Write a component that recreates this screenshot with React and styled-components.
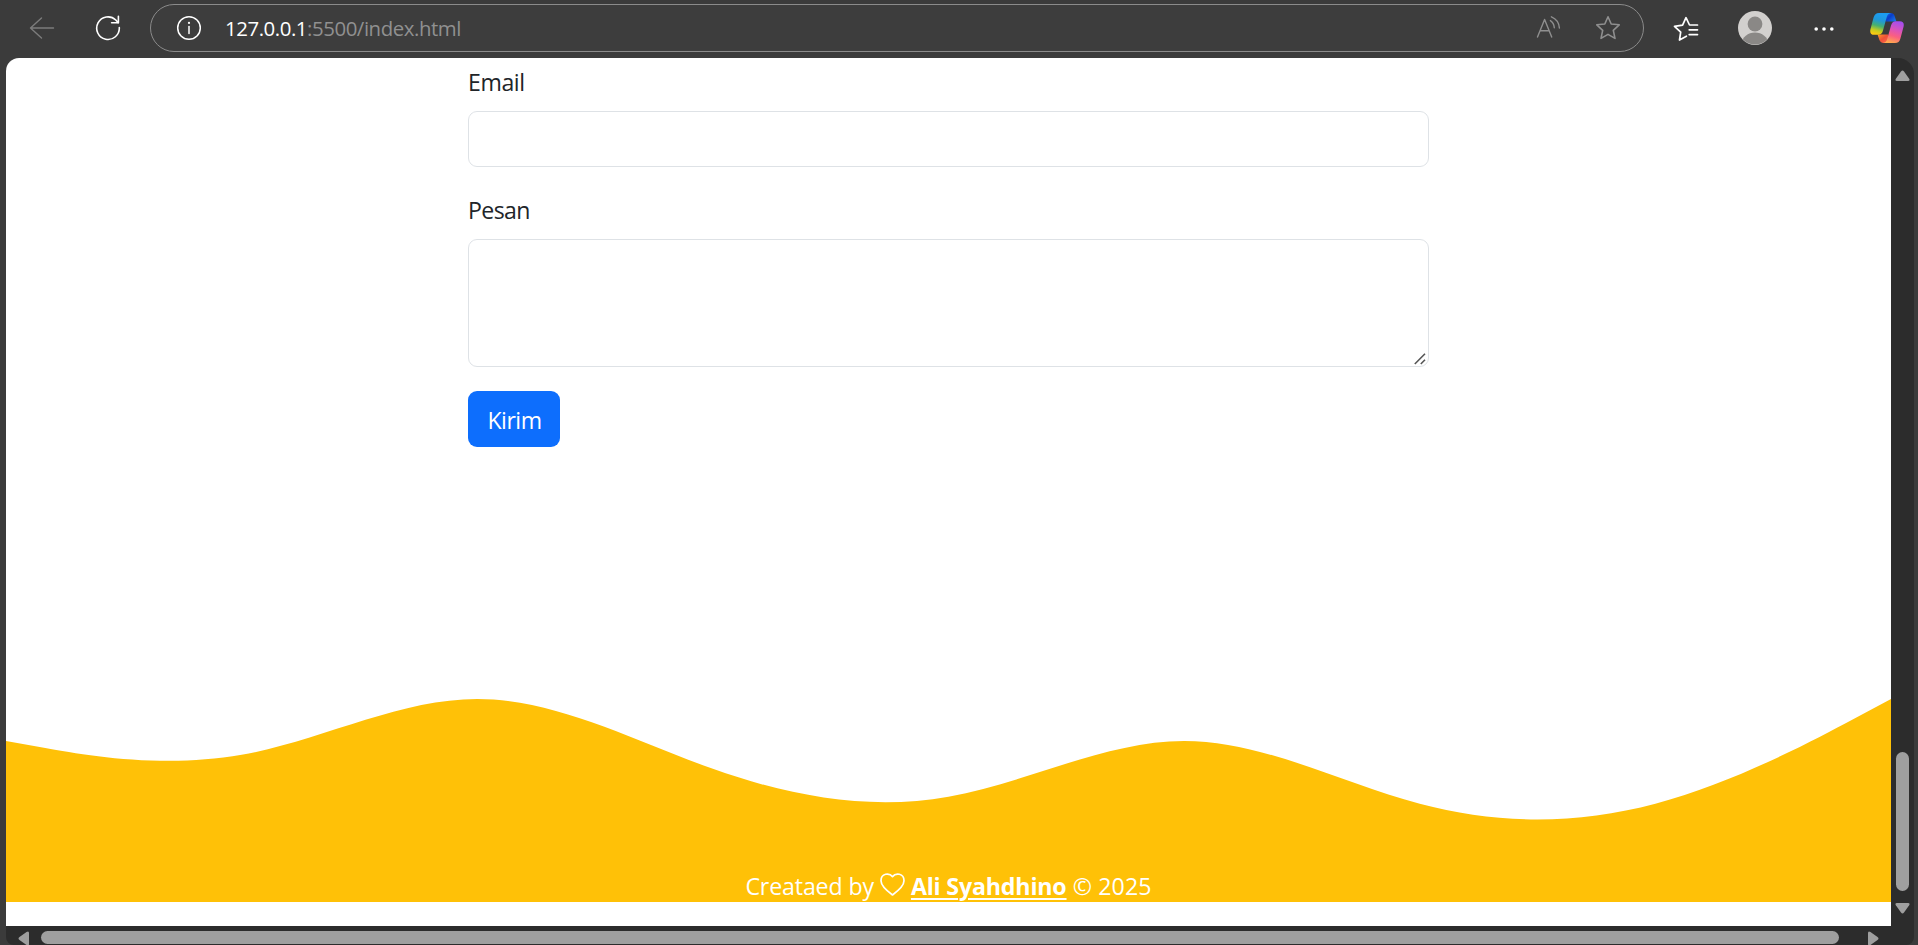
import React from "react";
import styled, { createGlobalStyle } from "styled-components";

const GlobalStyle = createGlobalStyle`
  *, *::before, *::after { box-sizing: border-box; }
  html, body { margin: 0; height: 100%; overflow: hidden; background: #3b3b3b; }
  #root { height: 100%; }
  body { font-family: "Open Sans", "Noto Sans", sans-serif; }
`;

const Browser = styled.div`
  height: 945px;
  width: 1918px;
  display: flex;
  flex-direction: column;
  background: #3b3b3b;
  overflow: hidden;
`;

const Toolbar = styled.header`
  height: 58px;
  flex: none;
  display: flex;
  align-items: flex-start;
  padding: 4px 0 0 24px;
`;

const IconButton = styled.button`
  display: flex;
  align-items: center;
  justify-content: center;
  flex: none;
  width: ${(p) => p.$width}px;
  height: ${(p) => p.$height || 48}px;
  margin: 0 0 0 ${(p) => p.$gap || 0}px;
  padding: 0;
  border: 0;
  background: none;
  color: ${(p) => p.$color || "#ffffff"};
`;

const AddressBar = styled.div`
  display: flex;
  align-items: center;
  flex: none;
  width: 1494px;
  height: 48px;
  margin-left: 29px;
  padding: 0 22px 0 25px;
  border: 1px solid #8b8b8b;
  border-radius: 24px;
  background: #3d3d3d;
`;

const Url = styled.span`
  flex: 1;
  margin-left: 23px;
  font-size: 20.4px;
  line-height: 28px;
  letter-spacing: -0.44px;
  color: #909090;
`;

const Host = styled.span`
  color: #ffffff;
`;

const Content = styled.div`
  flex: 1;
  min-height: 0;
  display: flex;
  margin: 0 4px 0 6px;
  border-radius: 13px 16px 8px 8px;
  overflow: hidden;
  background: #2c2c2c;
`;

const Main = styled.div`
  width: 1885px;
  flex: none;
  display: flex;
  flex-direction: column;
`;

const Page = styled.main`
  height: 868px;
  flex: none;
  display: flex;
  flex-direction: column;
  background: #ffffff;
`;

const Form = styled.form`
  width: 961px;
  height: 641px;
  flex: none;
  margin: 0 auto;
  padding-top: 7px;
  display: flex;
  flex-direction: column;
  align-items: flex-start;
`;

const Label = styled.label`
  height: 35px;
  margin-bottom: 11px;
  font-size: 23.1px;
  line-height: 35px;
  letter-spacing: ${(p) => p.$spacing || 0}px;
  color: #212529;
`;

const Input = styled.input`
  width: 100%;
  height: 56px;
  margin: 0 0 26px;
  border: 1px solid #dee2e6;
  border-radius: 9px;
  outline: none;
`;

const MessageBox = styled.div`
  width: 100%;
  height: 128px;
  margin-bottom: 24px;
  border: 1px solid #dee2e6;
  border-radius: 9px;
  display: flex;
  align-items: flex-end;
  justify-content: flex-end;
  padding: 0 2px 1px 0;
`;

const Submit = styled.button`
  width: 92px;
  height: 56px;
  padding: 2px 0 0 1px;
  border: 0;
  border-radius: 9px;
  background: #0d6efd;
  color: #ffffff;
  font: 23.1px/54px "Open Sans", "Noto Sans", sans-serif;
  letter-spacing: -0.5px;
`;

const Wave = styled.svg`
  display: block;
  flex: none;
  width: 1885px;
  height: 165px;
`;

const Footer = styled.footer`
  height: 38px;
  flex: none;
  display: flex;
  align-items: center;
  justify-content: center;
  padding-top: 6px;
  background: #ffc107;
  color: #ffffff;
  font-size: 23.2px;
  line-height: 32px;
  white-space: pre;
`;

const FooterText = styled.span`
  letter-spacing: ${(p) => p.$spacing || 0}px;
`;

const HeartIcon = styled.svg`
  flex: none;
  margin: 0 6px 3px 6px;
`;

const AuthorLink = styled.a`
  color: #ffffff;
  font-weight: 700;
  text-decoration: underline;
  text-decoration-thickness: 2px;
  text-underline-offset: 3px;
  letter-spacing: -0.18px;
`;

const HorizontalBar = styled.div`
  flex: 1;
  display: flex;
  align-items: flex-start;
  padding: 5px 0 0 12px;
`;

const HorizontalThumb = styled.div`
  width: 1798px;
  height: 13px;
  margin: 0 29px 0 12px;
  border-radius: 7px;
  background: #9f9f9f;
`;

const VerticalBar = styled.div`
  flex: 1;
  display: flex;
  flex-direction: column;
  padding: 12px 0 0 4px;
`;

const VerticalThumb = styled.div`
  width: 13px;
  height: 139px;
  margin: 671px 0 12px 1px;
  border-radius: 7px;
  background: #9f9f9f;
`;

const ARROWS = {
  up: "M6 1.5Q7.5-.5 9 1.5L14 8.500Q15.500 11 13 11H2Q-.5 11 1 8.500Z",
  down: "M6 9.5Q7.5 11.5 9 9.5L14 2.500Q15.500 0 13 0H2Q-.5 0 1 2.500Z",
  left: "M1.5 6Q-.5 7.5 1.5 9L8.500 14Q11 15.500 11 13V2Q11-.5 8.500 1Z",
  right: "M9.5 6Q11.5 7.5 9.5 9L2.500 14Q0 15.500 0 13V2Q0-.5 2.500 1Z",
};

const Arrow = ({ direction }) => {
  const vertical = direction === "up" || direction === "down";
  const w = vertical ? 15 : 11;
  const h = vertical ? 11 : 15;
  return (
    <svg width={w} height={h} viewBox={`0 0 ${w} ${h}`} fill="#9f9f9f">
      <path d={ARROWS[direction]} />
    </svg>
  );
};

const BackIcon = () => (
  <svg width="26" height="24" viewBox="0 0 26 24" fill="none" stroke="currentColor" strokeWidth="1.4" strokeLinecap="round" strokeLinejoin="round">
    <path d="M12.5 2 1.5 12l11 10M1.5 12h23" />
  </svg>
);

const ReloadIcon = () => (
  <svg width="26" height="26" viewBox="0 0 26 26" fill="none" stroke="currentColor" strokeWidth="1.6" strokeLinecap="round" strokeLinejoin="round">
    <path d="M24.3 12.5A11.3 11.3 0 1 1 20.8 5L23.2 7.6" />
    <path d="M23.4 1.2v6.6h-6.8" />
  </svg>
);

const InfoIcon = () => (
  <svg width="26" height="26" viewBox="0 0 26 26" fill="none">
    <circle cx="13" cy="13" r="11.3" stroke="#fff" strokeWidth="1.5" />
    <path d="M13 11.4v7" stroke="#fff" strokeWidth="1.5" strokeLinecap="round" />
    <circle cx="13" cy="7.9" r="1.1" fill="#fff" />
  </svg>
);

const ReadAloudIcon = () => (
  <svg width="26" height="26" viewBox="0 0 26 26" fill="none" stroke="currentColor" strokeWidth="1.4" strokeLinecap="round" strokeLinejoin="round">
    <path d="M1.5 22 8.600 4.500 15.700 22M4.200 15.800h8.800" />
    <path d="M14.400 5.600Q18 7.800 18.300 12.800M15.400 1.800Q22.800 4.800 23.400 13" />
  </svg>
);

const STAR = "M13 1.8 16.2 9 24.2 9.8 18.3 15.4 20 23.4 13 19.4 6 23.4 7.7 15.4 1.8 9.8 9.8 9Z";

const StarIcon = () => (
  <svg width="26" height="26" viewBox="0 0 26 26" fill="none" stroke="currentColor" strokeWidth="1.6" strokeLinejoin="round">
    <path d={STAR} />
  </svg>
);

const FavoritesIcon = () => (
  <svg width="26" height="26" viewBox="0 0 26 26" fill="none" stroke="currentColor" strokeWidth="1.7" strokeLinecap="round" strokeLinejoin="round">
    <path d="M13.4 20.2 6.5 24 7.7 16.2 1.5 10.3 9.6 9.1 13 1.7 16.5 9H24.5M16.2 13.8h8.3M16.2 18.6h8.3" />
  </svg>
);

const AvatarIcon = () => (
  <svg width="34" height="34" viewBox="0 0 34 34">
    <defs>
      <clipPath id="avatar">
        <circle cx="17" cy="17" r="16.6" />
      </clipPath>
    </defs>
    <circle cx="17" cy="17" r="17" fill="#d2d0ce" />
    <g clipPath="url(#avatar)" fill="#8a8886">
      <circle cx="17" cy="13" r="7.4" />
      <ellipse cx="17" cy="32" rx="13" ry="10.4" />
    </g>
  </svg>
);

const MoreIcon = () => (
  <svg width="20" height="6" viewBox="0 0 20 6" fill="currentColor">
    <circle cx="2.2" cy="3" r="1.8" />
    <circle cx="10" cy="3" r="1.8" />
    <circle cx="17.8" cy="3" r="1.8" />
  </svg>
);

const CopilotIcon = () => (
  <svg width="34" height="30" viewBox="0 0 34 30">
    <defs>
      <linearGradient id="copilotLeft" x1="0.6" y1="0" x2="0.35" y2="1">
        <stop offset="0.08" stopColor="#1c9cf0" />
        <stop offset="0.35" stopColor="#2098d8" />
        <stop offset="0.6" stopColor="#46b070" />
        <stop offset="0.82" stopColor="#c4cc20" />
        <stop offset="1" stopColor="#ffca10" />
      </linearGradient>
      <linearGradient id="copilotRight" x1="0.7" y1="0" x2="0.4" y2="1">
        <stop offset="0" stopColor="#a34df0" />
        <stop offset="0.4" stopColor="#dc54b8" />
        <stop offset="0.68" stopColor="#fb5f80" />
        <stop offset="1" stopColor="#ffa94e" />
      </linearGradient>
      <linearGradient id="copilotTop" x1="0" y1="0" x2="1" y2="0.8">
        <stop offset="0" stopColor="#1a6ce8" />
        <stop offset="0.45" stopColor="#0a3cc8" />
        <stop offset="1" stopColor="#1878e8" />
      </linearGradient>
      <linearGradient id="copilotBottom" x1="0" y1="0" x2="1" y2="1">
        <stop offset="0" stopColor="#ff9a28" />
        <stop offset="0.5" stopColor="#f05038" />
        <stop offset="1" stopColor="#f86a50" />
      </linearGradient>
    </defs>
    <path d="M16 0h4.500c2.300 0 3.500 1.200 4.200 3.200L26.400 8.400H15.800Z" fill="url(#copilotTop)" />
    <path d="M18 30h-4.500c-2.300 0-3.500-1.200-4.200-3.200L7.600 21.600H18.200Z" fill="url(#copilotBottom)" />
    <path d="M9 0h12c-2.300.3-3.600 1.700-4.300 4.200L13 17.500c-.8 2.900-2.300 4.300-5 4.300H4.300C.9 21.800-.3 19.800.4 16.500L3.500 4.800C4.400 1.500 6 0 9 0Z" fill="url(#copilotLeft)" />
    <path d="M25 30H13c2.300-.3 3.600-1.700 4.300-4.200L21 12.500c.8-2.900 2.300-4.300 5-4.300h3.700c3.400 0 4.600 2 3.900 5.300l-3.100 11.700c-.9 3.300-2.500 4.800-5.500 4.800Z" fill="url(#copilotRight)" />
  </svg>
);

const ResizeGrip = () => (
  <svg width="12" height="12" viewBox="0 0 12 12" stroke="#555" strokeWidth="1.6">
    <path d="M.8 11 11 .8M6.800 11 11 6.800" />
  </svg>
);

const WAVE_POINTS = [32, 64, -32, 64, 96, 0, 96, 96, 0];
const WAVE_STEP = 180;

// Uniform cubic B-spline through the control heights, written out as Bezier segments.
function wavePath(points, step) {
  const last = points.length - 1;
  let d = `M0,${points[0]}L${step / 6},${(5 * points[0] + points[1]) / 6}`;
  for (let i = 1; i <= last; i += 1) {
    const a = points[i - 1];
    const b = points[i];
    const x = (i - 1) * step;
    const end = i === last;
    const c = end ? b : points[i + 1];
    const endX = end ? last * step - step / 6 : i * step;
    d += `C${x + step / 3},${(2 * a + b) / 3},${x + (2 * step) / 3},${(a + 2 * b) / 3},${endX},${(a + 4 * b + c) / 6}`;
  }
  return `${d}L${last * step},${points[last]}V200H0Z`;
}

export default function App() {
  return (
    <Browser>
      <GlobalStyle />
      <Toolbar>
        <IconButton $width={36} $height={47} $color="#7c7c7c"><BackIcon /></IconButton>
        <IconButton $width={26} $gap={35}><ReloadIcon /></IconButton>
        <AddressBar>
          <InfoIcon />
          <Url><Host>127.0.0.1</Host>:5500/index.html</Url>
          <IconButton $width={26} $color="#8f8f8f"><ReadAloudIcon /></IconButton>
          <IconButton $width={26} $gap={33} $color="#8f8f8f"><StarIcon /></IconButton>
        </AddressBar>
        <IconButton $width={26} $gap={29} $height={50}><FavoritesIcon /></IconButton>
        <IconButton $width={34} $gap={39}><AvatarIcon /></IconButton>
        <IconButton $width={20} $gap={42} $height={49}><MoreIcon /></IconButton>
        <IconButton $width={34} $gap={36}><CopilotIcon /></IconButton>
      </Toolbar>
      <Content>
        <Main>
          <Page>
            <Form>
              <Label htmlFor="email" $spacing={-0.4}>Email</Label>
              <Input id="email" type="email" />
              <Label $spacing={-0.6}>Pesan</Label>
              <MessageBox><ResizeGrip /></MessageBox>
              <Submit type="button">Kirim</Submit>
            </Form>
            <Wave viewBox="0 0 1440 126" preserveAspectRatio="none">
              <path d={wavePath(WAVE_POINTS, WAVE_STEP)} fill="#ffc107" />
            </Wave>
            <Footer>
              <FooterText $spacing={-0.15}>Creataed by</FooterText>
              <HeartIcon width="25" height="23" viewBox="0 0 25 23" fill="none" stroke="#fff" strokeWidth="1.7" strokeLinejoin="round">
                <path d="M12.500 3.600C9.500-.2 1-.2 1 7.800 1 12.500 5 16.500 12.500 22 20 16.500 24 12.500 24 7.800 24-.2 15.500-.2 12.500 3.600Z" />
              </HeartIcon>
              <AuthorLink>Ali Syahdhino</AuthorLink>
              <FooterText $spacing={0.1}> © 2025</FooterText>
            </Footer>
          </Page>
          <HorizontalBar>
            <Arrow direction="left" />
            <HorizontalThumb />
            <Arrow direction="right" />
          </HorizontalBar>
        </Main>
        <VerticalBar>
          <Arrow direction="up" />
          <VerticalThumb />
          <Arrow direction="down" />
        </VerticalBar>
      </Content>
    </Browser>
  );
}
